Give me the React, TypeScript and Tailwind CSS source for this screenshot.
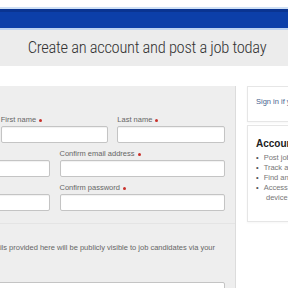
import React from "react";

const Dot = () => (
  <span className="inline-block w-[3px] h-[3px] rounded-full bg-[#c8312b] ml-[3px] align-middle" />
);

function Field({ label, required = true }: { label: string; required?: boolean }) {
  return (
    <div className="flex flex-col">
      <div className="h-[10px] mb-[1px] text-[7.5px] leading-[10px] text-[#666] whitespace-nowrap">
        {label}
        {required && <Dot />}
      </div>
      <div className="h-[17px] bg-white border border-[#c4c4c4] rounded-[2px] shadow-[inset_0_1px_1px_rgba(0,0,0,0.06)]" />
    </div>
  );
}

export default function App() {
  const perks = [
    "Post jobs in minutes",
    "Track applications online",
    "Find and contact candidates",
    "Access your account on any",
  ];

  return (
    <div className="w-[288px] h-[288px] overflow-hidden bg-white relative font-['Liberation_Sans',Arial,sans-serif]">
      {/* TOP BAR */}
      <div className="h-[7px] bg-white" />
      <div className="h-[2px] bg-[#cfe0f5]" />
      <div className="h-[19px] bg-[#0c3fa9] border-t-[3px] border-[#0a3491]" />
      <div className="h-[2px] bg-[#bcd2f0]" />

      {/* TITLE */}
      <div className="h-[36px] bg-[#ececec] flex items-center justify-center pl-[6px]">
        <h1 className="text-[16.5px] font-light text-[#333] tracking-[-0.3px] whitespace-nowrap font-['Liberation_Sans_Narrow','Roboto_Condensed',Roboto,sans-serif]">
          Create an account and post a job today
        </h1>
      </div>

      {/* BODY */}
      <div className="flex gap-[11px] ml-[-126px] w-[548px] pt-[20px]">
        {/* FORM */}
        <div className="w-[362px] shrink-0 bg-[#eeeeee] border-r border-[#dcdcdc]">
          <div className="px-[10px] pt-[29px] pb-[12px] border-b border-[#e4e4e4] flex flex-col gap-[6px]">
            <div className="grid grid-cols-3 gap-x-[9px]">
              <Field label="Title" />
              <Field label="First name" />
              <Field label="Last name" />
            </div>
            <div className="grid grid-cols-2 gap-x-[10px]">
              <Field label="Email address" />
              <Field label="Confirm email address" />
            </div>
            <div className="grid grid-cols-2 gap-x-[10px]">
              <Field label="Password" />
              <Field label="Confirm password" />
            </div>
          </div>
          <div className="px-[10px] pt-[19px] pb-[20px]">
            <p className="text-[7.5px] leading-[10px] text-[#666] whitespace-nowrap">
              Please note that the company details provided here will be publicly visible to job candidates via your
            </p>
            <div className="mt-[29px] h-[17px] bg-white border border-[#c4c4c4] rounded-[2px]" />
          </div>
        </div>

        {/* SIDEBAR */}
        <div className="w-[175px] shrink-0 flex flex-col">
          <div className="h-[36px] bg-white border border-[#e6e6e6] px-[8px] pt-[10px] shadow-[0_1px_2px_rgba(0,0,0,0.04)]">
            <a className="block text-[7.5px] leading-[10px] text-[#4a6590] whitespace-nowrap">Sign in if you already have an account</a>
          </div>
          <div className="mt-[3px] bg-white border border-[#e6e6e6] px-[8px] pt-[12px] pb-[18px] shadow-[0_1px_2px_rgba(0,0,0,0.04)]">
            <h2 className="text-[10px] font-bold text-[#222] leading-[12px] whitespace-nowrap">Account benefits</h2>
            <ul className="mt-[3px] text-[7.5px] leading-[10px] text-[#777]">
              {perks.map((p) => (
                <li key={p} className="flex gap-[5px] whitespace-nowrap">
                  <span className="text-[#555]">•</span>
                  <span>{p}</span>
                </li>
              ))}
              <li className="pl-[10px]">device</li>
            </ul>
          </div>
        </div>
      </div>
    </div>
  );
}
